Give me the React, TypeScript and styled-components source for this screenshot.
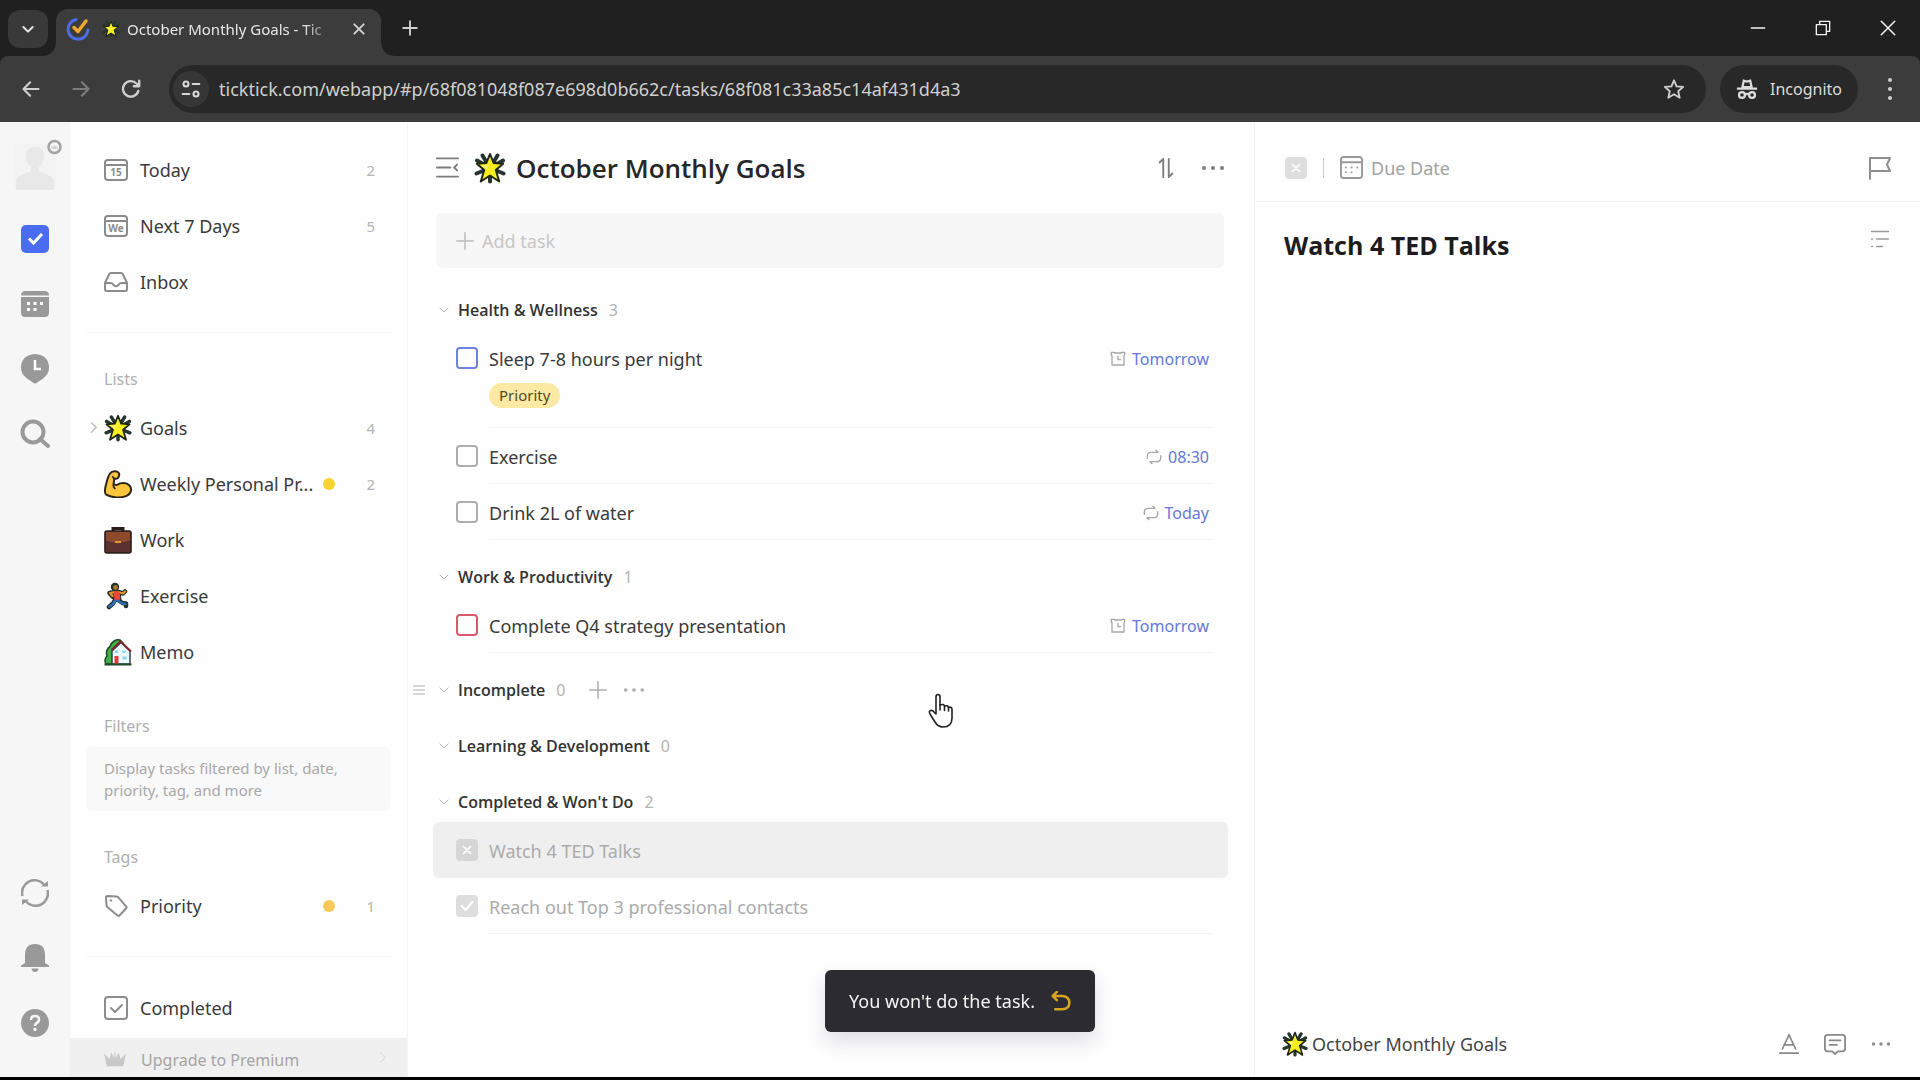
import React from "react";
import styled, { createGlobalStyle } from "styled-components";

const GlobalStyle = createGlobalStyle`
  *, *::before, *::after { box-sizing: border-box; }
  html, body { margin: 0; padding: 0; background: #fefefe; }
  body, button, input { font-family: "Noto Sans", "Open Sans", sans-serif; }
  h1, h2 { font-family: "Open Sans", "Noto Sans", sans-serif; }
  button { border: 0; padding: 0; background: none; color: inherit; cursor: pointer; }
  h1, h2, h3, p, ul { margin: 0; padding: 0; }
  ul { list-style: none; }
  a { color: inherit; text-decoration: none; }
  svg { display: block; flex: none; }
`;

/* ---------- window shell ---------- */

const Window = styled.div`
  height: 100vh;
  display: flex;
  flex-direction: column;
  border-bottom: 3px solid #000;
  overflow: hidden;
  background: #202020;
`;

const TabStrip = styled.header`
  height: 56px;
  flex: none;
  display: flex;
  padding-left: 8px;
`;

const TabSearch = styled.button`
  width: 40px;
  height: 38px;
  margin-top: 10px;
  border-radius: 12px;
  background: #393939;
  color: #e6e6e6;
  display: grid;
  place-items: center;
`;

const Tab = styled.div`
  position: relative;
  width: 325px;
  margin: 9px 0 0 8px;
  padding: 0 10px 8px 10px;
  display: flex;
  align-items: center;
  background: #3c3c3c;
  border-radius: 12px 12px 0 0;
  color: #e6e6e6;
  &::before, &::after {
    content: "";
    position: absolute;
    bottom: 0;
    width: 12px;
    height: 12px;
  }
  &::before { left: -12px; background: radial-gradient(circle at 0 0, transparent 11px, #3c3c3c 12px); }
  &::after { right: -12px; background: radial-gradient(circle at 100% 0, transparent 11px, #3c3c3c 12px); }
`;

const TabIcons = styled.span`
  display: flex;
  align-items: center;
  gap: 12px;
`;

const TabTitle = styled.span`
  flex: 1;
  margin: 0 10px 0 7px;
  font-size: 15px;
  line-height: 24px;
  white-space: nowrap;
  mask-image: linear-gradient(to right, #000 84%, transparent 100%);
`;

const BarButton = styled.button<{ $dim?: boolean }>`
  width: 24px;
  height: 24px;
  display: grid;
  place-items: center;
  color: ${(p) => (p.$dim ? "#7c7c7c" : "#d0d0d0")};
`;

const NewTab = styled(BarButton)`
  margin: 16px 0 0 17px;
`;

const WindowControls = styled.div`
  margin-left: auto;
  display: flex;
`;

const WindowButton = styled.button`
  width: 65px;
  height: 56px;
  display: grid;
  place-items: center;
  color: #f2f2f2;
`;

const Toolbar = styled.nav`
  height: 66px;
  flex: none;
  display: flex;
  align-items: center;
  padding: 0 18px 0 19px;
  background: #3c3c3c;
  border-radius: 8px 8px 0 0;
`;

const NavButtons = styled.div`
  display: flex;
  gap: 26px;
  margin-right: 26px;
`;

const AddressBar = styled.form`
  flex: 1;
  height: 48px;
  display: flex;
  align-items: center;
  padding: 0 20px 0 4px;
  border-radius: 24px;
  background: #282828;
`;

const SiteInfo = styled.button`
  width: 36px;
  height: 36px;
  border-radius: 18px;
  background: #363636;
  color: #d8d8d8;
  display: grid;
  place-items: center;
`;

const AddressInput = styled.input`
  flex: 1;
  min-width: 0;
  margin-left: 10px;
  padding: 0;
  border: 0;
  outline: 0;
  background: none;
  color: #d0d0d0;
  font-size: 18px;
  line-height: 28px;
`;

const IncognitoChip = styled.button`
  height: 48px;
  margin: 0 20px 0 14px;
  padding: 0 16px;
  display: flex;
  align-items: center;
  gap: 12px;
  border-radius: 24px;
  background: #282828;
  color: #dcdcdc;
  font-size: 16px;
`;

const AppShell = styled.div`
  flex: 1;
  min-height: 0;
  display: grid;
  grid-template-columns: 70px 338px minmax(0, 847fr) minmax(0, 665fr);
  background: #fefefe;
`;

/* ---------- icon rail ---------- */

const Rail = styled.nav`
  display: flex;
  flex-direction: column;
  align-items: center;
  padding-bottom: 22px;
  background: #f6f6f6;
  border-right: 1px solid #f2f2f2;
  color: #999;
`;

const RailButton = styled.button`
  width: 56px;
  height: 65px;
  display: grid;
  place-items: center;
`;

const AvatarButton = styled.button`
  width: 69px;
  height: 84px;
`;

const Spacer = styled.div`
  flex: 1;
`;

/* ---------- sidebar ---------- */

const Sidebar = styled.aside`
  display: flex;
  flex-direction: column;
  min-height: 0;
  padding-top: 20px;
  border-right: 1px solid #f5f5f5;
`;

const SideLink = styled.a`
  position: relative;
  height: 56px;
  padding: 0 32px 0 34px;
  display: grid;
  grid-template-columns: 28px minmax(0, 1fr) auto 32px;
  column-gap: 8px;
  align-items: center;
  font-size: 18px;
  line-height: 28px;
  color: #3a3a3a;
  & > svg { color: #8c8c8c; }
`;

const SideLabel = styled.span`
  white-space: nowrap;
`;

const Dot = styled.i<{ $color: string }>`
  width: 12px;
  height: 12px;
  border-radius: 6px;
  background: ${(p) => p.$color};
`;

const SideCount = styled.span`
  grid-column: 4;
  text-align: right;
  font-size: 15px;
  color: #b4b4b4;
`;

const Expander = styled.span`
  position: absolute;
  left: 17px;
  top: 21px;
  color: #b8b8b8;
`;

const SectionTitle = styled.h3`
  height: 42px;
  margin-top: 25px;
  padding-left: 34px;
  font-size: 16px;
  line-height: 42px;
  font-weight: 400;
  color: #b0b0b0;
`;

const Divider = styled.hr`
  width: auto;
  height: 1px;
  margin: 22px 16px 0;
  border: 0;
  background: #f6f6f6;
`;

const FilterHint = styled.p`
  height: 64px;
  margin: 0 16px;
  padding: 10px 18px;
  border-radius: 6px;
  background: #f9f9f9;
  font-size: 15px;
  line-height: 22px;
  color: #a8a8a8;
`;

const CompletedGroup = styled.div`
  margin-top: 23px;
`;

const Upgrade = styled.button`
  height: 39px;
  margin-top: auto;
  padding: 0 18px 0 34px;
  display: flex;
  align-items: center;
  gap: 15px;
  background: #f0f0f0;
  color: #a4a4a4;
  font-size: 16px;
  & > span { flex: 1; text-align: left; padding-top: 4px; }
  & > svg { color: #c8c8c8; }
  & > svg:last-child { color: #dedede; }
`;

/* ---------- task list ---------- */

const Main = styled.main`
  display: flex;
  flex-direction: column;
  min-height: 0;
  padding: 0 26px 0 25px;
  border-right: 1px solid #f4f4f4;
`;

const ListHeader = styled.header`
  height: 91px;
  flex: none;
  display: flex;
  align-items: center;
  padding: 0 3px;
  color: #7c7c7c;
`;

const ListTitle = styled.h1`
  flex: 1;
  display: flex;
  align-items: center;
  gap: 10px;
  margin-left: 15px;
  font-size: 26px;
  line-height: 36px;
  font-weight: 600;
  color: #262626;
`;

const HeaderButton = styled.button`
  display: grid;
  place-items: center;
  height: 28px;
  & + & { margin-left: 24px; }
`;

const AddTask = styled.label`
  height: 55px;
  flex: none;
  margin: 0 4px 0 3px;
  padding: 0 20px;
  display: flex;
  align-items: center;
  gap: 8px;
  border-radius: 6px;
  background: #f7f7f7;
  color: #bdbdbd;
`;

const AddInput = styled.input`
  flex: 1;
  padding: 0;
  border: 0;
  outline: 0;
  background: none;
  font-size: 18px;
  line-height: 28px;
  color: #333;
  &::placeholder { color: #c6c6c6; opacity: 1; }
`;

const Groups = styled.div`
  padding-top: 6px;
`;

const GroupHeader = styled.header`
  position: relative;
  height: 40px;
  margin-top: 16px;
  padding-left: 5px;
  display: flex;
  align-items: center;
  color: #adadad;
`;

const GroupTitle = styled.h2`
  margin: 0 11px 0 8px;
  font-size: 16px;
  line-height: 24px;
  font-weight: 600;
  color: #333;
`;

const GroupCount = styled.span`
  font-size: 16px;
  line-height: 24px;
  color: #b4b4b4;
`;

const GroupButton = styled.button`
  margin-left: 24px;
  & + & { margin-left: 16px; }
`;

const DragHandle = styled.span`
  position: absolute;
  left: -20px;
  top: 14px;
`;

const TaskList = styled.ul`
  &:not(:empty) { padding-bottom: 1px; }
`;

const TaskRow = styled.li<{ $selected?: boolean }>`
  display: flex;
  padding: 0 15px 0 23px;
  border-radius: 6px;
  background: ${(p) => (p.$selected ? "#efefef" : "transparent")};
`;

const CheckWrap = styled.span`
  display: grid;
  place-items: center;
  width: 22px;
  height: 56px;
  & > * { grid-area: 1 / 1; }
  & > svg { pointer-events: none; }
`;

const CheckInput = styled.input<{ $tone: string }>`
  appearance: none;
  margin: 0;
  width: 22px;
  height: 22px;
  border: 2px solid ${(p) => p.$tone};
  border-radius: 4px;
  &:checked { background: ${(p) => p.$tone}; }
`;

const TaskBody = styled.div<{ $line: boolean }>`
  flex: 1;
  min-height: 56px;
  margin-left: 11px;
  padding: 15px 4px 0 0;
  border-bottom: 1px solid ${(p) => (p.$line ? "#f3f3f3" : "transparent")};
`;

const TaskLine = styled.div`
  display: flex;
  align-items: center;
  justify-content: space-between;
`;

const TaskTitle = styled.label<{ $done?: boolean }>`
  font-size: 18px;
  line-height: 28px;
  color: ${(p) => (p.$done ? "#ababab" : "#3a3a3a")};
`;

const Meta = styled.span`
  display: flex;
  align-items: center;
  gap: 6px;
  font-size: 16px;
  line-height: 28px;
  color: #6479da;
  & > svg { color: #a6a6a6; }
`;

const Tag = styled.a`
  display: inline-block;
  height: 25px;
  margin: 10px 0 19px;
  padding: 0 10px;
  border-radius: 13px;
  background: #fbe9a4;
  color: #554a22;
  font-size: 15px;
  line-height: 25px;
`;

/* ---------- detail ---------- */

const Detail = styled.section`
  display: flex;
  flex-direction: column;
  min-height: 0;
`;

const DetailBar = styled.header`
  height: 80px;
  padding: 12px 28px 0 30px;
  display: flex;
  align-items: center;
  border-bottom: 1px solid #f4f4f4;
  color: #8e8e8e;
`;

const SmallCheck = styled(CheckWrap)`
  height: 22px;
`;

const Rule = styled.i`
  width: 1px;
  height: 20px;
  margin: 0 16px;
  background: #ccc;
`;

const DueButton = styled.button`
  display: flex;
  align-items: center;
  gap: 8px;
  font-size: 18px;
  line-height: 28px;
  color: #a2a2a2;
  & > svg { color: #999; }
`;

const Pushed = styled.button`
  margin-left: auto;
`;

const DetailHead = styled.div`
  display: flex;
  align-items: flex-start;
  padding: 25px 30px 0 29px;
  color: #999;
`;

const DetailTitle = styled.h2`
  font-size: 25px;
  line-height: 36px;
  font-weight: 700;
  color: #1c1c1c;
`;

const OutlineButton = styled(Pushed)`
  padding-top: 2px;
`;

const DetailFooter = styled.footer`
  height: 66px;
  margin-top: auto;
  padding: 0 29px 0 27px;
  display: flex;
  align-items: center;
  gap: 25px;
  color: #8a8a8a;
`;

const ListLink = styled.a`
  flex: 1;
  display: flex;
  align-items: center;
  gap: 4px;
  font-size: 18px;
  line-height: 28px;
  color: #444;
`;

/* ---------- overlays ---------- */

const Toast = styled.div`
  position: fixed;
  left: 50%;
  bottom: 48px;
  transform: translateX(-50%);
  height: 62px;
  padding: 0 24px;
  display: flex;
  align-items: center;
  gap: 16px;
  border-radius: 6px;
  background: #2b2b31;
  color: #f4f4f4;
  font-size: 18px;
  white-space: nowrap;
  box-shadow: 0 10px 20px rgba(40, 40, 80, 0.14);
`;

const Pointer = styled.svg`
  position: fixed;
  left: 927px;
  top: 693px;
`;

/* ---------- drawings ---------- */

type IconProps = { size?: number; children: React.ReactNode; w?: number };
const Line = ({ size = 24, w = 2, children }: IconProps) => (
  <svg width={size} height={size} viewBox="0 0 24 24" fill="none" stroke="currentColor" strokeWidth={w} strokeLinecap="round" strokeLinejoin="round" aria-hidden="true">
    {children}
  </svg>
);

const Chevron = ({ right }: { right?: boolean }) => (
  <Line size={13} w={2.5}>{right ? <path d="M8 3l9 9-9 9" /> : <path d="M4 8l8 8 8-8" />}</Line>
);

const Dots = ({ size = 24 }: { size?: number }) => (
  <svg width={size} height={size} viewBox="0 0 24 24" fill="currentColor" aria-hidden="true">
    <circle cx="3" cy="12" r="2" /><circle cx="12" cy="12" r="2" /><circle cx="21" cy="12" r="2" />
  </svg>
);

const Star = ({ size = 28 }: { size?: number }) => (
  <svg width={size} height={size} viewBox="0 0 32 32" aria-hidden="true">
    <g fill="none" stroke="#26352f" strokeLinecap="round" strokeWidth="4">
      <path d="M16 16L8.500 3.500M16 16l7.500-12.500M16 16L3 8.500M16 16l13-7.500M16 16L2.500 21.500M16 16l13.500 5.500M16 16v13.500" />
    </g>
    <path d="M16 2l3.600 9 9.600.8-7.400 6.200 3.400 11.500L16 23.500l-9.200 6L10.200 18 2.800 11.800l9.600-.8z" fill="#f9ee1f" stroke="#1d2614" strokeWidth="2" strokeLinejoin="round" />
    <path d="M16 7l-2.500 6-6 .5 5 3.500z" fill="#fffb86" />
  </svg>
);

const Muscle = () => (
  <svg width="28" height="28" viewBox="0 0 28 28" aria-hidden="true">
    <path d="M6 3.500C8 .8 13 .6 14.800 3c.8 1.600.2 3.800-1.200 5.200-1 .8-2.600.6-3.400.4L9.600 14c1.400 1 2.600 1.200 4 .6 3.600-2.400 9-2 11.600.6 3.400 3.400 2 8.600-2.600 10.600-5.600 2.400-14.600 2.200-20.400-1.200C.4 23.200.8 19 2 14.600 3 10.600 3.800 6.500 6 3.500z" fill="#fcc73c" stroke="#2e2618" strokeWidth="2" strokeLinejoin="round" />
    <path d="M10 8.500L8.600 6.600M9.600 14c-.6 2 0 3.600 1.400 4.600" fill="none" stroke="#2e2618" strokeWidth="1.600" strokeLinecap="round" />
  </svg>
);

const Briefcase = () => (
  <svg width="28" height="28" viewBox="0 0 28 28" aria-hidden="true">
    <path d="M9 6V2.500h10V6" fill="none" stroke="#2b1d1c" strokeWidth="3" />
    <rect x="1" y="5" width="26" height="22" rx="2" fill="#5b3230" stroke="#2b1d1c" strokeWidth="1.600" />
    <path d="M2 6h24v8.500l-12 3-12-3z" fill="#8f4a2d" />
    <path d="M11 16h6" stroke="#d79a35" strokeWidth="2" />
  </svg>
);

const Runner = () => (
  <svg width="28" height="28" viewBox="0 0 28 28" fill="none" strokeLinecap="round" strokeLinejoin="round" aria-hidden="true">
    <path d="M11 10L5.500 11l3 3.500M14 10l5 1.500 2-2M11.500 17L9 21.500 5 25M14 18l4.500 3 3.500.5V24" stroke="#26302c" strokeWidth="4.500" />
    <circle cx="11" cy="5" r="4.200" fill="#26302c" />
    <path d="M10.500 9.500h4.500L16 18h-5z" fill="#26302c" stroke="#26302c" strokeWidth="3" />
    <path d="M11 10L6 11l2.500 3M14 10l5 1.500 2-2" stroke="#d99b2c" strokeWidth="2.200" />
    <path d="M11.500 18L9 22l-3.500 2.500M14 18.500l4.500 3 3 .5" stroke="#2c6fb5" strokeWidth="2.600" />
    <circle cx="11.500" cy="5.500" r="2.400" fill="#a8782b" />
    <path d="M10.500 10H15l.6 7H11z" fill="#e8473a" stroke="#e8473a" strokeWidth="1.400" />
  </svg>
);

const House = () => (
  <svg width="28" height="28" viewBox="0 0 28 28" aria-hidden="true">
    <path d="M2 26c-2-3-.6-6.500 1-8-1.500-4 .4-8 3-9.500C7.500 3.500 12 1 16 2l3 3v21z" fill="#3fae45" stroke="#1e4a26" strokeWidth="1.500" />
    <path d="M8 13l9-8.500 9 8.500v13H8z" fill="#eafaff" stroke="#31414a" strokeWidth="1.500" />
    <path d="M7.500 12L16.500 3.500 27 13.500" fill="none" stroke="#7e2430" strokeWidth="2" strokeLinejoin="round" />
    <rect x="10.500" y="18" width="4" height="8" fill="#e03c3c" />
    <path d="M18.500 18.500h4v3h-4zM11 12.500h3v2.500h-3zM18.500 12.500h3v2.500h-3z" fill="#8fd3ee" />
    <path d="M.5 26.500h27" stroke="#1e4a26" strokeWidth="2" />
  </svg>
);

const CalBox = ({ text }: { text: string }) => (
  <svg width="24" height="24" viewBox="0 0 24 24" aria-hidden="true">
    <rect x="1" y="2" width="22" height="20" rx="3" fill="none" stroke="currentColor" strokeWidth="2" />
    <path d="M1 7h22" stroke="currentColor" strokeWidth="2" />
    <text x="12" y="18" textAnchor="middle" fontSize="10" fontWeight="700" fill="currentColor">{text}</text>
  </svg>
);

const InboxIcon = () => (
  <Line w={2}><path d="M1 13L5 4.500Q5.500 3 7 3h10q1.500 0 2 1.500L23 13v6q0 2-2 2H3q-2 0-2-2zM1 13h6q1.500 0 2.500 2 2.500 2.500 5 0 1-2 2.500-2h6" /></Line>
);

const TagIcon = () => (
  <Line w={2}><path d="M2 3.500q0-1.500 1.500-1.500l9 .5q1 0 1.800.8l7.700 9q1 1.200 0 2.200l-6.500 7q-1 1-2 0L3.300 13q-.8-.8-.8-1.800zM6.500 6.500h.8" /></Line>
);

const Tick = () => <Line size={16} w={3}><path d="M4 12l6 6L20 6" stroke="#fff" /></Line>;
const Cross = () => <Line size={14} w={3}><path d="M6 6l12 12M18 6L6 18" stroke="#fff" /></Line>;

const AlarmIcon = () => (
  <Line size={16} w={2}><path d="M2 2h4l1 1h10l1-1h4v4l-1 1v14H3V7L2 6zM12 8v5h4" /></Line>
);

const RepeatIcon = () => (
  <Line size={16} w={2}><path d="M2 14v-3q0-6 6-6h10l-3-3M22 10v3q0 6-6 6H6l3 3" /></Line>
);

/* ---------- data ---------- */

type Task = { id: string; title: string; tone: string; when?: string; icon?: "alarm" | "repeat"; tag?: string; mark?: "x" | "tick"; selected?: boolean };
type Group = { title: string; count: number; hovered?: boolean; tasks: Task[] };

const groups: Group[] = [
  {
    title: "Health & Wellness", count: 3, tasks: [
      { id: "sleep", title: "Sleep 7-8 hours per night", tone: "#6c84e0", when: "Tomorrow", icon: "alarm", tag: "Priority" },
      { id: "exercise", title: "Exercise", tone: "#adadad", when: "08:30", icon: "repeat" },
      { id: "water", title: "Drink 2L of water", tone: "#adadad", when: "Today", icon: "repeat" },
    ],
  },
  {
    title: "Work & Productivity", count: 1, tasks: [
      { id: "q4", title: "Complete Q4 strategy presentation", tone: "#d8596c", when: "Tomorrow", icon: "alarm" },
    ],
  },
  { title: "Incomplete", count: 0, hovered: true, tasks: [] },
  { title: "Learning & Development", count: 0, tasks: [] },
  {
    title: "Completed & Won't Do", count: 2, tasks: [
      { id: "ted", title: "Watch 4 TED Talks", tone: "#d6d6d6", mark: "x", selected: true },
      { id: "contacts", title: "Reach out Top 3 professional contacts", tone: "#dedede", mark: "tick" },
    ],
  },
];

const smart = [
  { label: "Today", count: 2, icon: <CalBox text="15" /> },
  { label: "Next 7 Days", count: 5, icon: <CalBox text="We" /> },
  { label: "Inbox", icon: <InboxIcon /> },
];

const lists = [
  { label: "Goals", count: 4, icon: <Star />, expandable: true },
  { label: "Weekly Personal Pr...", count: 2, icon: <Muscle />, dot: "#f6d32d" },
  { label: "Work", icon: <Briefcase /> },
  { label: "Exercise", icon: <Runner /> },
  { label: "Memo", icon: <House /> },
];

type SideItemProps = { label: string; icon: React.ReactNode; count?: number; dot?: string; expandable?: boolean };
const SideItem = ({ label, icon, count, dot, expandable }: SideItemProps) => (
  <SideLink href="#">
    {expandable && <Expander><Chevron right /></Expander>}
    {icon}
    <SideLabel>{label}</SideLabel>
    {dot && <Dot $color={dot} />}
    {count !== undefined && <SideCount>{count}</SideCount>}
  </SideLink>
);

const TaskItem = ({ task }: { task: Task }) => (
  <TaskRow $selected={task.selected}>
    <CheckWrap>
      <CheckInput id={task.id} type="checkbox" $tone={task.tone} defaultChecked={!!task.mark} />
      {task.mark === "x" && <Cross />}
      {task.mark === "tick" && <Tick />}
    </CheckWrap>
    <TaskBody $line={!task.selected}>
      <TaskLine>
        <TaskTitle htmlFor={task.id} $done={!!task.mark}>{task.title}</TaskTitle>
        {task.when && <Meta>{task.icon === "alarm" ? <AlarmIcon /> : <RepeatIcon />}{task.when}</Meta>}
      </TaskLine>
      {task.tag && <Tag href="#">{task.tag}</Tag>}
    </TaskBody>
  </TaskRow>
);

const BrowserChrome = () => (
  <>
    <TabStrip>
      <TabSearch aria-label="Search tabs"><Line size={16} w={3}><path d="M5 9l7 7 7-7" /></Line></TabSearch>
      <Tab>
        <TabIcons>
          <Line size={24} w={3}>
            <path d="M10 2.500A10 10 0 1 0 22 13" stroke="#4b6ee8" />
            <path d="M8 10.500l4 4L20 4" stroke="#f0a92c" strokeWidth="3.500" />
          </Line>
          <Star size={18} />
        </TabIcons>
        <TabTitle>October Monthly Goals - Tic</TabTitle>
        <BarButton aria-label="Close tab"><Line size={16} w={3}><path d="M5 5l14 14M19 5L5 19" /></Line></BarButton>
      </Tab>
      <NewTab aria-label="New tab"><Line size={18} w={2.5}><path d="M12 3v18M3 12h18" /></Line></NewTab>
      <WindowControls>
        <WindowButton aria-label="Minimise"><Line size={16} w={2}><path d="M2 12h20" /></Line></WindowButton>
        <WindowButton aria-label="Restore"><Line size={16} w={2}><path d="M2 7h15v15H2zM7 7V2h15v15h-5" /></Line></WindowButton>
        <WindowButton aria-label="Close"><Line size={18} w={2}><path d="M3 3l18 18M21 3L3 21" /></Line></WindowButton>
      </WindowControls>
    </TabStrip>
    <Toolbar>
      <NavButtons>
        <BarButton aria-label="Back"><Line size={20} w={2.5}><path d="M21 12H4M11 4l-8 8 8 8" /></Line></BarButton>
        <BarButton aria-label="Forward" $dim><Line size={20} w={2.5}><path d="M3 12h17M13 4l8 8-8 8" /></Line></BarButton>
        <BarButton aria-label="Reload"><Line size={22} w={2.5}><path d="M20 14a8.500 8.500 0 1 1-2-8l3 3M21 3v6h-6" /></Line></BarButton>
      </NavButtons>
      <AddressBar>
        <SiteInfo type="button" aria-label="Site information">
          <Line size={20} w={2.5}><circle cx="6" cy="6" r="3" /><path d="M14 6h8M2 18h8" /><circle cx="18" cy="18" r="3" /></Line>
        </SiteInfo>
        <AddressInput aria-label="Address" defaultValue="ticktick.com/webapp/#p/68f081048f087e698d0b662c/tasks/68f081c33a85c14af431d4a3" />
        <BarButton type="button" aria-label="Bookmark"><Line size={22} w={2}><path d="M12 2.500l2.800 6.600 7.200.6-5.400 4.700 1.600 7.100-6.200-3.800-6.200 3.800 1.600-7.100L2 9.700l7.200-.6z" /></Line></BarButton>
      </AddressBar>
      <IncognitoChip>
        <svg width="22" height="22" viewBox="0 0 24 24" fill="none" stroke="currentColor" strokeWidth="2.500" aria-hidden="true">
          <path d="M7 10l1.500-7 3.500 1 3.500-1L17 10zM1 11.500h22" />
          <circle cx="6.500" cy="18.500" r="3.200" /><circle cx="17.500" cy="18.500" r="3.200" /><path d="M10 18q2-1.500 4 0" />
        </svg>
        Incognito
      </IncognitoChip>
      <BarButton aria-label="Menu">
        <svg width="24" height="24" viewBox="0 0 24 24" fill="currentColor"><circle cx="12" cy="3" r="2" /><circle cx="12" cy="12" r="2" /><circle cx="12" cy="21" r="2" /></svg>
      </BarButton>
    </Toolbar>
  </>
);

const IconRail = () => (
  <Rail>
    <AvatarButton aria-label="Account">
      <svg width="69" height="84" viewBox="0 0 69 84">
        <rect x="14" y="22" width="42" height="46" rx="4" fill="#f3f3f3" />
        <path d="M26 34q0-9 9-9t9 9q0 7-5 11v4l11 5q4 2 4 8v6H16v-6q0-6 4-8l11-5v-4q-5-4-5-11z" fill="#e8e8e8" />
        <circle cx="54.500" cy="25" r="6" fill="#f6f6f6" stroke="#a4a4a4" strokeWidth="2.500" />
        <path d="M51.500 24l1.500 1 1.500-2 1.500 2 1.500-1v3h-6z" fill="#d0d0d0" />
      </svg>
    </AvatarButton>
    <RailButton aria-label="Tasks">
      <svg width="28" height="28" viewBox="0 0 28 28"><rect width="28" height="28" rx="5" fill="#4a6cf0" /><path d="M8 13.500l4.500 4.500L21 9" fill="none" stroke="#fff" strokeWidth="3" /></svg>
    </RailButton>
    <RailButton aria-label="Calendar">
      <svg width="28" height="28" viewBox="0 0 28 28" fill="currentColor">
        <path d="M4.500 1h19Q28 1 28 5.500H0Q0 1 4.500 1zM0 7h28v15.500Q28 27 23.500 27h-19Q0 27 0 22.500z" />
        <path d="M6 12h3v3H6zM12.500 12h3v3h-3zM19 12h3v3h-3zM6 18h3v3H6zM12.500 18h3v3h-3z" fill="#fff" />
      </svg>
    </RailButton>
    <RailButton aria-label="Habits">
      <svg width="28" height="30" viewBox="0 0 28 30" fill="currentColor"><path d="M14 0q14 1 14 14 0 6-6 10.500L15.500 29q-1.500 1-3 0L6 24.500Q0 20 0 14 0 1 14 0z" /><path d="M14 6v9h6" fill="none" stroke="#fff" strokeWidth="2.500" /></svg>
    </RailButton>
    <RailButton aria-label="Search">
      <svg width="30" height="30" viewBox="0 0 30 30" fill="none" stroke="currentColor" strokeWidth="4"><circle cx="13" cy="13" r="10.500" /><path d="M20 20l8 7" strokeLinecap="round" /></svg>
    </RailButton>
    <Spacer />
    <RailButton aria-label="Sync">
      <svg width="28" height="28" viewBox="0 0 28 28" fill="none" stroke="currentColor" strokeWidth="2.500">
        <path d="M1.500 17A12.500 12.500 0 0 1 23 5.500M26.500 11A12.500 12.500 0 0 1 5 22.500" />
        <path d="M20 7.500h7V2zM8 20.500H1V26z" fill="currentColor" stroke="none" />
      </svg>
    </RailButton>
    <RailButton aria-label="Notifications">
      <svg width="28" height="28" viewBox="0 0 28 28" fill="currentColor"><path d="M14 0q10 0 10 11v8l4 2.500V23H0v-1.500L4 19v-8Q4 0 14 0zM10.500 24.500h7Q17 28 14 28t-3.500-3.500z" /></svg>
    </RailButton>
    <RailButton aria-label="Help">
      <svg width="28" height="28" viewBox="0 0 28 28"><circle cx="14" cy="14" r="14" fill="currentColor" /><path d="M10 11q0-4 4-4t4 3.600q0 2.400-2.200 3.400-1.800.8-1.800 3" fill="none" stroke="#f6f6f6" strokeWidth="2.500" /><circle cx="14" cy="20.500" r="1.700" fill="#f6f6f6" /></svg>
    </RailButton>
  </Rail>
);

export default function App() {
  return (
    <>
      <GlobalStyle />
      <Window>
        <BrowserChrome />
        <AppShell>
          <IconRail />
          <Sidebar>
            {smart.map((s) => <SideItem key={s.label} {...s} />)}
            <Divider />
            <SectionTitle>Lists</SectionTitle>
            {lists.map((l) => <SideItem key={l.label} {...l} />)}
            <SectionTitle>Filters</SectionTitle>
            <FilterHint>Display tasks filtered by list, date, priority, tag, and more</FilterHint>
            <SectionTitle>Tags</SectionTitle>
            <SideItem label="Priority" icon={<TagIcon />} count={1} dot="#f8c95a" />
            <Divider />
            <CompletedGroup>
              <SideItem label="Completed" icon={<Line w={2}><rect x="1" y="1" width="22" height="22" rx="3" /><path d="M7 12l4 4 7-7" /></Line>} />
            </CompletedGroup>
            <Upgrade>
              <svg width="22" height="20" viewBox="0 0 24 20" fill="currentColor"><path d="M0 5l6 6 2-7 3 6 1-9 1 9 3-6 2 7 6-6-3 14H3z" /></svg>
              <span>Upgrade to Premium</span>
              <Chevron right />
            </Upgrade>
          </Sidebar>

          <Main>
            <ListHeader>
              <HeaderButton aria-label="Collapse sidebar"><Line size={23} w={2}><path d="M1 2.500h22M1 12h14M1 21.500h22M22 9l-3 3 3 3" /></Line></HeaderButton>
              <ListTitle><Star size={32} />October Monthly Goals</ListTitle>
              <HeaderButton aria-label="Sort"><Line size={22} w={2}><path d="M9 22V2L5 6M15 2v20l4-4" /></Line></HeaderButton>
              <HeaderButton aria-label="More"><Dots /></HeaderButton>
            </ListHeader>
            <AddTask>
              <Line size={18} w={2}><path d="M12 1v22M1 12h22" /></Line>
              <AddInput placeholder="Add task" aria-label="Add task" />
            </AddTask>
            <Groups>
              {groups.map((g) => (
                <section key={g.title}>
                  <GroupHeader>
                    {g.hovered && <DragHandle><Line size={12} w={2}><path d="M1 4h22M1 12h22M1 20h22" /></Line></DragHandle>}
                    <Line size={12} w={2}><path d="M4 8l8 8 8-8" /></Line>
                    <GroupTitle>{g.title}</GroupTitle>
                    <GroupCount>{g.count}</GroupCount>
                    {g.hovered && <GroupButton aria-label="Add to section"><Line size={18} w={2}><path d="M12 1v22M1 12h22" /></Line></GroupButton>}
                    {g.hovered && <GroupButton aria-label="Section options"><Dots size={22} /></GroupButton>}
                  </GroupHeader>
                  <TaskList>{g.tasks.map((t) => <TaskItem key={t.id} task={t} />)}</TaskList>
                </section>
              ))}
            </Groups>
          </Main>

          <Detail>
            <DetailBar>
              <SmallCheck>
                <CheckInput type="checkbox" aria-label="Won't do" $tone="#dedede" defaultChecked />
                <Cross />
              </SmallCheck>
              <Rule />
              <DueButton>
                <Line size={23} w={2}><rect x="1" y="1" width="22" height="22" rx="3" /><path d="M1 6.500h22M6 12h.1M12 12h.1M18 12h.1M6 17h.1M12 17h.1" /></Line>
                Due Date
              </DueButton>
              <Pushed aria-label="Priority"><Line size={24} w={2}><path d="M2 23V2h20l-3 6.500 3 6.500H2" /></Line></Pushed>
            </DetailBar>
            <DetailHead>
              <DetailTitle>Watch 4 TED Talks</DetailTitle>
              <OutlineButton aria-label="Outline"><Line size={20} w={2}><path d="M2 3h20M2 12h1M8 12h14M2 21h1M8 21h7" /></Line></OutlineButton>
            </DetailHead>
            <DetailFooter>
              <ListLink href="#"><Star size={26} />October Monthly Goals</ListLink>
              <button aria-label="Format"><Line size={20} w={2}><path d="M4 18L12 1l8 17M7 13h10M1 23h22" /></Line></button>
              <button aria-label="Comment"><Line size={22} w={2}><path d="M4 2h16q3 0 3 3v12q0 3-3 3h-5l-3 3-3-3H4q-3 0-3-3V5q0-3 3-3zM6 8h12M6 13h8" /></Line></button>
              <button aria-label="More actions"><Dots size={20} /></button>
            </DetailFooter>
          </Detail>
        </AppShell>
      </Window>

      <Toast role="status">
        You won't do the task.
        <button aria-label="Undo"><Line size={20} w={3}><path d="M7 1L2 6l5 5M2 6h12q8 1 8 8t-8 8H5" stroke="#d9a520" /></Line></button>
      </Toast>
      <Pointer width="28" height="36" viewBox="0 0 28 36" fill="#fff" stroke="#222" strokeWidth="1.600" strokeLinejoin="round" strokeLinecap="round" aria-hidden="true">
        <path d="M9 21V4q0-2.500 2-2.500T13 4v8q4-1.500 4.500 1 3.500-1 4 1.200 3.500-.6 3.500 2.300V25q0 9-9 9-5 0-8-5l-5-8q-1.500-3 .5-3.500T7 19z" />
        <path d="M13 12v5M17.500 13v4.500M21.500 14.200V18" fill="none" />
      </Pointer>
    </>
  );
}
